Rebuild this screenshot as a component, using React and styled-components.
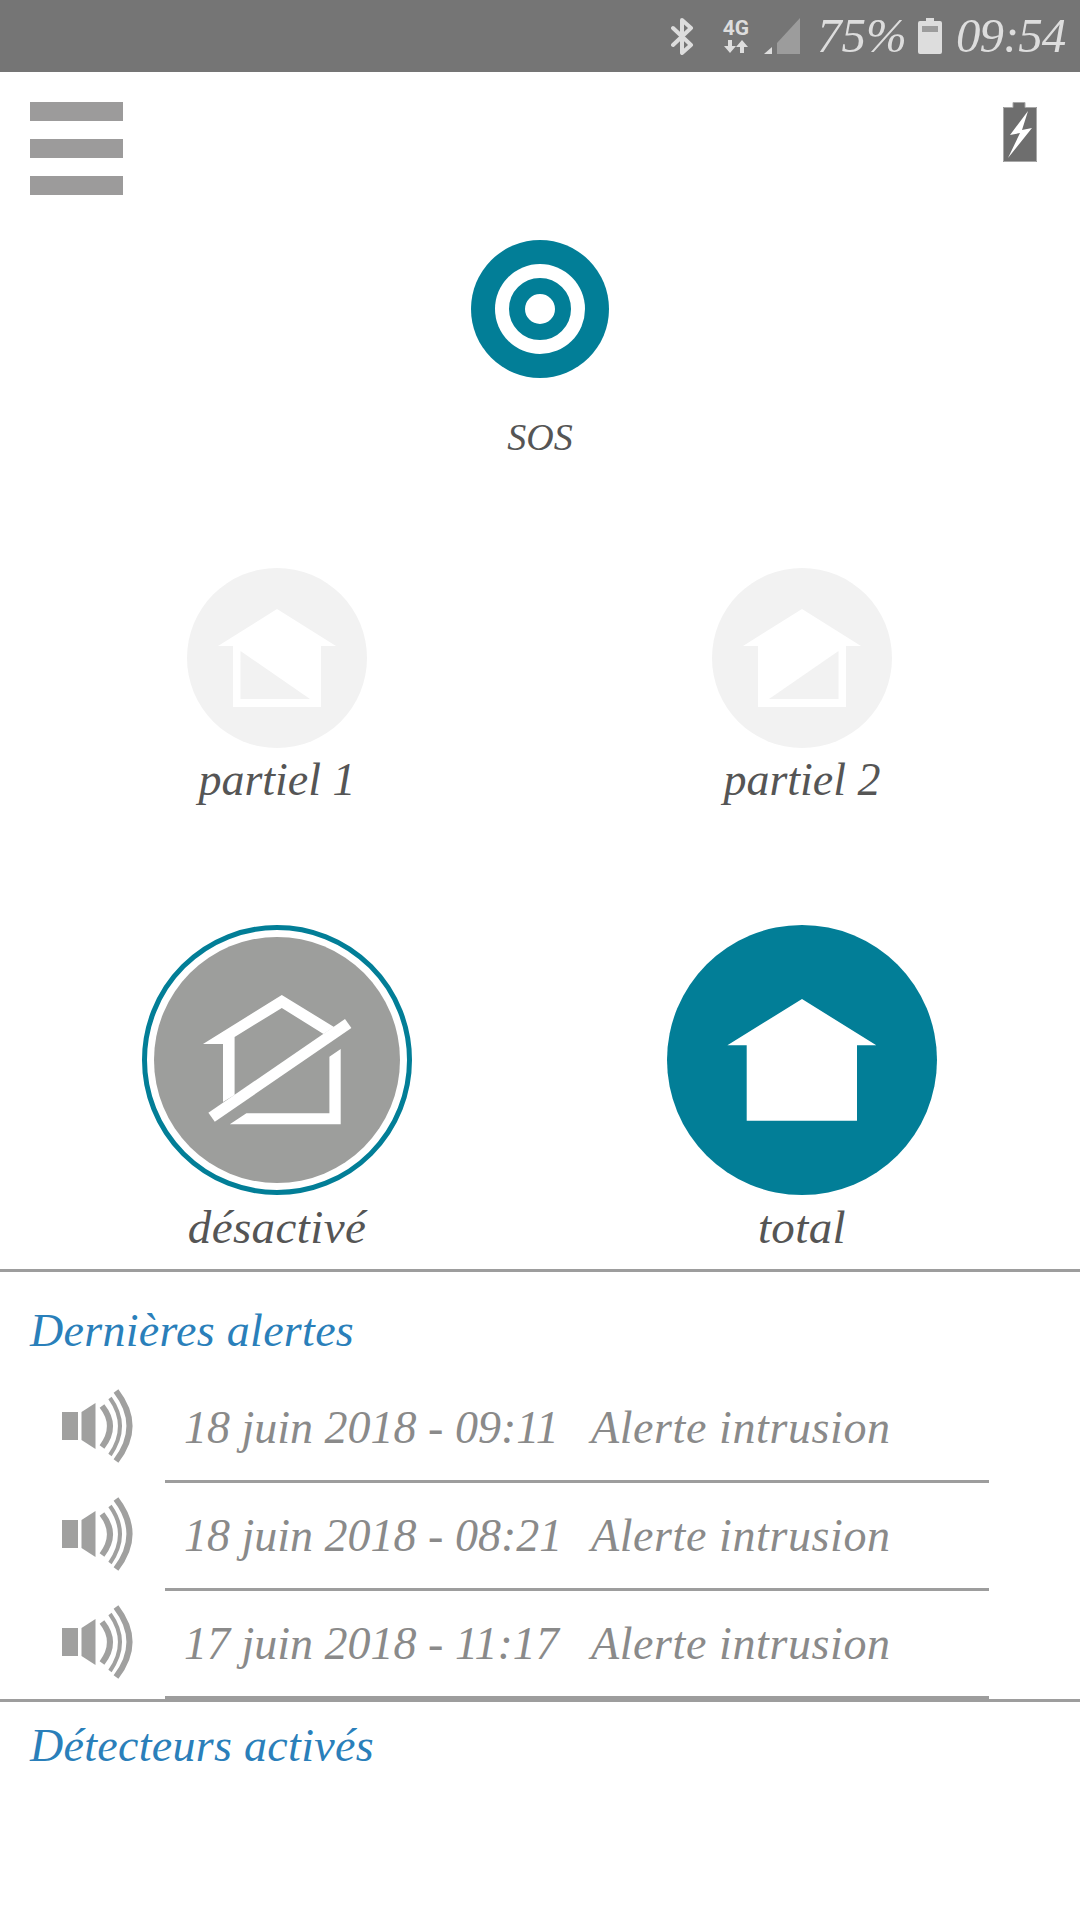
import React from 'react';
import styled, { createGlobalStyle } from 'styled-components';

const TEAL = '#027e97';
const FONT = '"Liberation Serif", "DejaVu Serif", serif';

const alerts = [
    { date: '18 juin 2018 - 09:11', label: 'Alerte intrusion' },
    { date: '18 juin 2018 - 08:21', label: 'Alerte intrusion' },
    { date: '17 juin 2018 - 11:17', label: 'Alerte intrusion' },
];

function BluetoothIcon() {
    return (
        <StatusSvg width="23" height="37" viewBox="0 0 23 37" $ml="0">
            <path d="M2 10 L20 27 L11 35 L11 2 L20 10 L2 27" fill="none" stroke="#ddd" strokeWidth="4" strokeLinejoin="round" strokeLinecap="round" />
        </StatusSvg>
    );
}

function NetworkIcon() {
    return (
        <NetworkWrap>
            <NetworkText>4G</NetworkText>
            <svg width="24" height="13" viewBox="0 0 24 13">
                <path d="M4 0 h4 v6 h4 l-6 7 l-6 -7 h4 z M18 0 l6 7 h-4 v6 h-4 v-6 h-4 z" fill="#ddd" />
            </svg>
        </NetworkWrap>
    );
}

function SignalIcon() {
    return (
        <StatusSvg width="36" height="36" viewBox="0 0 36 36" $ml="14px">
            <polygon points="0,36 8,29 8,36" fill="#ddd" />
            <polygon points="13,36 13,25 36,0 36,36" fill="#9c9c9c" />
        </StatusSvg>
    );
}

function BatteryIcon() {
    return (
        <StatusSvg width="24" height="36" viewBox="0 0 24 36" $ml="13px">
            <path d="M8 0 h8 v3 h6 a2 2 0 0 1 2 2 v29 a2 2 0 0 1 -2 2 h-20 a2 2 0 0 1 -2 -2 v-29 a2 2 0 0 1 2 -2 h6 z" fill="#ddd" />
            <rect x="4" y="8" width="16" height="6" fill="#9c9c9c" />
        </StatusSvg>
    );
}

function ChargeIcon() {
    return (
        <svg width="34" height="60" viewBox="0 0 34 60">
            <path d="M10 0 h12 v5 h12 v55 h-34 v-55 h10 z" fill="#6e6e6e" />
            <path d="M10 0.5 h12 v5 h11.5 v54 h-33 v-54 h9.5 z" fill="none" stroke="#a8a8a8" strokeWidth="1" />
            <polygon points="25,9 7,33 17,31 5,56 29,26 19,28" fill="#fff" />
        </svg>
    );
}

function HalfHouse({ mirror }) {
    return (
        <HalfHouseSvg viewBox="0 0 180 180" $mirror={mirror}>
            <polygon points="90,41 149,78 134,78 134,139 46,139 46,78 31,78" fill="#fff" />
            <polygon points="53.5,83 53.5,131 123,131" fill="#f2f2f2" />
        </HalfHouseSvg>
    );
}

function FullHouse() {
    return (
        <svg width="270" height="270" viewBox="0 0 270 270">
            <polygon points="135,74 209.3,120.3 190,120.3 190,195.7 79.7,195.7 79.7,120.3 60.4,120.3" fill="#fff" />
        </svg>
    );
}

function CrossedHouse() {
    return (
        <svg width="246" height="246" viewBox="0 0 246 246">
            <g fill="#fff">
                <polygon points="127.8,58 180,90 169.5,97 127.8,71 80.6,100 80.6,158 69,165 69,107 49,107" />
                <polygon points="191,82 197.4,91 60.8,184.7 54.4,175.7" />
                <polygon points="186.7,112 186.7,187.3 75.8,187.3 92.4,176.3 175.4,176.3 175.4,119.7" />
            </g>
        </svg>
    );
}

function SpeakerIcon() {
    return (
        <svg width="71" height="74" viewBox="0 0 71 74">
            <rect x="0" y="23" width="16" height="28" fill="#a0a09f" />
            <polygon points="19.5,23 33.5,14 33.5,60 19.5,51" fill="#a0a09f" />
            <g fill="none" stroke="#a0a09f">
                <path d="M40 17 Q 56 37 40 58" strokeWidth="6" />
                <path d="M48 9 Q 68 37 48 66" strokeWidth="4" />
                <path d="M54 2 Q 81 37 54 72" strokeWidth="6" />
            </g>
        </svg>
    );
}

function Mode({ label, big, children }) {
    return (
        <ModeCell>
            {children}
            <ModeLabel $big={big}>{label}</ModeLabel>
        </ModeCell>
    );
}

export default function App() {
    return (
        <Page>
            <GlobalStyle />
            <StatusBar>
                <BluetoothIcon />
                <NetworkIcon />
                <SignalIcon />
                <StatusText>75%</StatusText>
                <BatteryIcon />
                <ClockText>09:54</ClockText>
            </StatusBar>

            <Header>
                <Burger>
                    <span />
                    <span />
                    <span />
                </Burger>
                <ChargeIcon />
            </Header>

            <SosBlock>
                <SosTarget>
                    <SosRing>
                        <SosCore />
                    </SosRing>
                </SosTarget>
                <SosLabel>SOS</SosLabel>
            </SosBlock>

            <ModeGrid>
                <Mode label="partiel 1">
                    <SoftCircle><HalfHouse /></SoftCircle>
                </Mode>
                <Mode label="partiel 2">
                    <SoftCircle><HalfHouse mirror /></SoftCircle>
                </Mode>
                <Mode label="désactivé" big>
                    <ActiveCircle><CrossedHouse /></ActiveCircle>
                </Mode>
                <Mode label="total" big>
                    <TotalCircle><FullHouse /></TotalCircle>
                </Mode>
            </ModeGrid>

            <Section>
                <SectionTitle>Dernières alertes</SectionTitle>
                <AlertList>
                    {alerts.map((a) => (
                        <AlertRow key={a.date}>
                            <SpeakerCell><SpeakerIcon /></SpeakerCell>
                            <AlertBody>
                                <AlertDate>{a.date}</AlertDate>
                                <AlertLabel>{a.label}</AlertLabel>
                            </AlertBody>
                        </AlertRow>
                    ))}
                </AlertList>
            </Section>

            <Section>
                <SectionTitle $compact>Détecteurs activés</SectionTitle>
            </Section>
        </Page>
    );
}

const GlobalStyle = createGlobalStyle`
    html, body {
        margin: 0;
        padding: 0;
        background: #fff;
    }
`;

const Page = styled.div`
    width: 1080px;
    height: 1920px;
    overflow: hidden;
    background: #fff;
    font-family: ${FONT};
    font-style: italic;
`;

const StatusBar = styled.div`
    height: 72px;
    background: #757575;
    display: flex;
    align-items: center;
    justify-content: flex-end;
    padding-right: 15px;
    color: #ddd;
`;

const StatusSvg = styled.svg`
    margin-left: ${(p) => p.$ml};
    flex: none;
`;

const NetworkWrap = styled.div`
    margin-left: 28px;
    width: 28px;
    display: flex;
    flex-direction: column;
    align-items: center;
    gap: 3px;
`;

const NetworkText = styled.div`
    font: bold 21px/18px "Roboto", sans-serif;
    color: #ddd;
`;

const StatusText = styled.div`
    margin-left: 17px;
    font-size: 49px;
    line-height: 72px;
    width: 88px;
    white-space: nowrap;
`;

const ClockText = styled.div`
    margin-left: 14px;
    width: 109px;
    font-size: 49px;
    line-height: 72px;
    letter-spacing: -1px;
    white-space: nowrap;
`;

const Header = styled.div`
    display: flex;
    justify-content: space-between;
    align-items: flex-start;
    padding: 30px 43px 0 30px;
`;

const Burger = styled.div`
    width: 93px;
    display: flex;
    flex-direction: column;
    gap: 18px;

    span {
        display: block;
        height: 19px;
        background: #9c9b9b;
    }
`;

const SosBlock = styled.div`
    margin-top: 45px;
    display: flex;
    flex-direction: column;
    align-items: center;
`;

const SosTarget = styled.div`
    width: 138px;
    height: 138px;
    border-radius: 50%;
    background: ${TEAL};
    display: flex;
    align-items: center;
    justify-content: center;
`;

const SosRing = styled.div`
    width: 90px;
    height: 90px;
    border-radius: 50%;
    background: #fff;
    display: flex;
    align-items: center;
    justify-content: center;
`;

const SosCore = styled.div`
    width: 30px;
    height: 30px;
    border-radius: 50%;
    background: #fff;
    border: 16.5px solid ${TEAL};
    box-sizing: content-box;
`;

const SosLabel = styled.div`
    margin-top: 34px;
    margin-bottom: 2px;
    font-size: 38px;
    line-height: 50px;
    color: #555;
`;

const ModeGrid = styled.div`
    margin-top: 104px;
    padding: 0 15px;
    display: grid;
    grid-template-columns: 524px 524px;
    column-gap: 1px;
    row-gap: 117px;
`;

const ModeCell = styled.div`
    display: flex;
    flex-direction: column;
    align-items: center;
    justify-content: flex-end;
`;

const ModeLabel = styled.div`
    margin-top: 4px;
    font-size: ${(p) => (p.$big ? '47px' : '46px')};
    letter-spacing: ${(p) => (p.$big ? '0.4px' : '0')};
    line-height: 56px;
    color: #555;
`;

const SoftCircle = styled.div`
    width: 180px;
    height: 180px;
    border-radius: 50%;
    background: #f2f2f2;
`;

const HalfHouseSvg = styled.svg`
    display: block;
    width: 180px;
    height: 180px;
    transform: ${(p) => (p.$mirror ? 'scaleX(-1)' : 'none')};
`;

const ActiveCircle = styled.div`
    width: 270px;
    height: 270px;
    box-sizing: border-box;
    border-radius: 50%;
    border: 5px solid ${TEAL};
    display: flex;
    align-items: center;
    justify-content: center;

    svg {
        flex: none;
        border-radius: 50%;
        background: #9d9e9c;
    }
`;

const TotalCircle = styled.div`
    width: 270px;
    height: 270px;
    border-radius: 50%;
    background: ${TEAL};

    svg {
        display: block;
    }
`;

const Section = styled.section`
    border-top: 3px solid #9d9d9d;
    margin-top: 0;

    &:first-of-type {
        margin-top: 14px;
    }
`;

const SectionTitle = styled.h2`
    margin: 0;
    padding: ${(p) => (p.$compact ? '16px' : '31px')} 0 0 30px;
    font-size: 46px;
    font-weight: normal;
    letter-spacing: 0.3px;
    line-height: 56px;
    color: #2a7fba;
`;

const AlertList = styled.div`
    margin-top: 16px;
`;

const AlertRow = styled.div`
    height: 108px;
    display: flex;
`;

const SpeakerCell = styled.div`
    width: 103px;
    margin-left: 62px;
    padding-bottom: 6px;
    box-sizing: border-box;
    display: flex;
    align-items: center;
`;

const AlertBody = styled.div`
    width: 824px;
    box-sizing: border-box;
    padding-left: 19px;
    border-bottom: 3px solid #9d9d9d;
    display: flex;
    align-items: center;
    font-size: 46px;
    color: #8a8a8a;
`;

const AlertDate = styled.span`
    width: 407px;
    white-space: nowrap;
`;

const AlertLabel = styled.span`
    letter-spacing: 0.6px;
    white-space: nowrap;
`;
